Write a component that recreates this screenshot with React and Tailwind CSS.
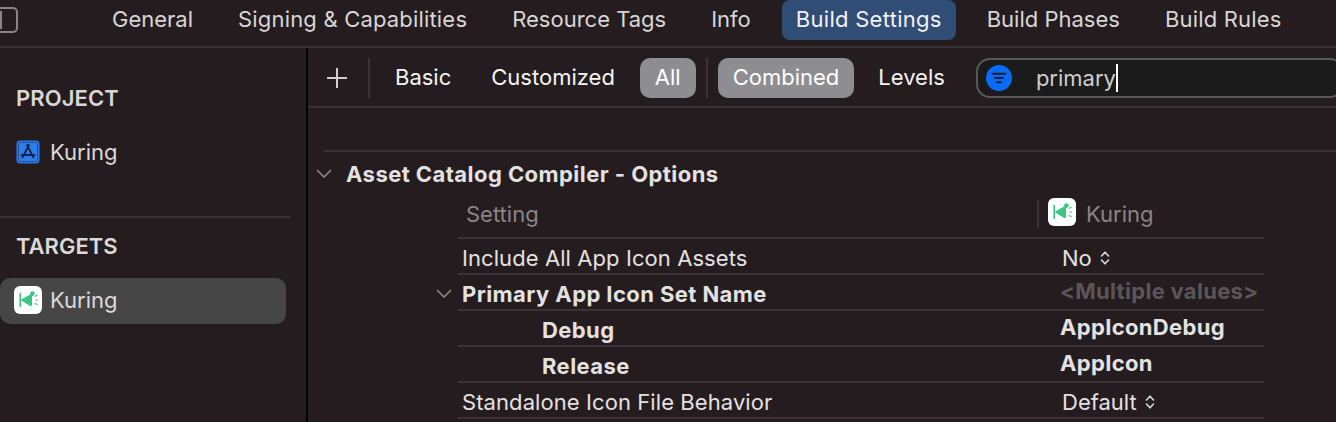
import React from "react";

const KuringIcon = ({ className }) => (
  <svg viewBox="0 0 28 28" className={className}>
    <rect width="28" height="28" rx="6" fill="#fff" />
    <path d="M6.2 7.5v13" stroke="#3cc583" strokeWidth="1.6" strokeLinecap="round" />
    <path d="M6.5 14 16.5 8.2 18 9v10.5l-1.5.8Z" fill="#3cc583" />
    <circle cx="18.4" cy="7.6" r="2.3" fill="#3cc583" />
    <path d="M21.2 10.2l1.9-.9M21.8 14h2M21.2 17.6l1.9.9" stroke="#3cc583" strokeWidth="1.2" strokeLinecap="round" />
  </svg>
);

const ProjectIcon = () => (
  <svg viewBox="0 0 24 24" className="w-6 h-6 shrink-0">
    <rect x="0.5" y="0.5" width="23" height="23" rx="4" fill="#2f7de9" />
    <rect x="2.4" y="2.4" width="19.2" height="19.2" rx="2.5" fill="none" stroke="#174a96" strokeWidth="0.9" />
    <path d="M13 5 8 14.5M11 5l6.5 12.5M5.5 15h13M7.8 15l-1.6 2.6" stroke="#0e2549" strokeWidth="1.8" strokeLinecap="round" fill="none" />
  </svg>
);

const Chevron = ({ className }) => (
  <svg viewBox="0 0 16 10" className={className} fill="none">
    <path d="M1.5 1.5 8 8l6.5-6.5" stroke="#8c8688" strokeWidth="1.7" strokeLinecap="round" strokeLinejoin="round" />
  </svg>
);

const Stepper = () => (
  <svg viewBox="0 0 10 16" className="w-[10px] h-4 ml-[8px]" fill="none">
    <path d="M1.5 6 5 2.2 8.5 6M1.5 10 5 13.8 8.5 10" stroke="#dcd9da" strokeWidth="1.6" strokeLinecap="round" strokeLinejoin="round" />
  </svg>
);

const Row = ({ label, value, indent, bold, chevron, valueClass, stepper }) => (
  <div className="flex items-center border-b-2 border-[#3a3234] h-[36px]">
    <div className={`relative w-[602px] shrink-0 pt-1 ${bold ? "font-bold tracking-[0.42px]" : "tracking-[0.08px]"} ${indent ? "pl-[84px]" : "pl-1"} text-[#e4e1e2]`}>
      {chevron && <Chevron className="absolute left-[-22px] top-[13px] w-4 h-[10px]" />}
      {label}
    </div>
    <div className={`flex items-center ${valueClass || "pl-[2px] pt-1 text-[#e4e1e2]"}`}>
      {value}
      {stepper && <Stepper />}
    </div>
  </div>
);

export default function App() {
  const tabs = [
    ["General", ""],
    ["Signing & Capabilities", "tracking-[0.18px]"],
    ["Resource Tags", ""],
    ["Info", ""],
    ["Build Settings", "tracking-[0.28px]"],
    ["Build Phases", ""],
    ["Build Rules", "tracking-[0.18px]"],
  ];
  return (
    <div className="w-[1336px] h-[422px] overflow-hidden bg-[#241c1e] text-[22px] leading-[28px] text-[#e4e1e2] flex flex-col" style={{ fontFamily: "Inter, 'Liberation Sans', sans-serif" }}>
      {/* Top tabs */}
      <div className="h-[48px] shrink-0 border-b-2 border-[#3a3234] flex items-start">
        <div className="w-[19px] h-[26px] mt-[7px] ml-[-1px] border-2 border-l-0 border-[#8a8486] rounded-r-[5px] flex shrink-0 items-center">
          <div className="w-[3px] h-[18px] bg-[#8a8486]"></div>
        </div>
        <div className="flex ml-[80px] gap-[17px]">
          {tabs.map(([t, cls]) => (
            <div key={t} className={`h-[40px] px-[14px] pb-[2px] flex items-center rounded-[8px] ${cls} ${t === "Build Settings" ? "bg-[#2f4d75] text-[#f2f2f4]" : "text-[#d9d6d7]"}`}>{t}</div>
          ))}
        </div>
      </div>

      <div className="flex flex-1 min-h-0">
        {/* Sidebar */}
        <div className="w-[308px] shrink-0 border-r-2 border-black pt-[36px] font-normal">
          <div className="pl-4 font-semibold tracking-[0.1px] text-[#d9d6d7]">PROJECT</div>
          <div className="flex items-center pl-4 gap-[10px] mt-[26px] h-[28px] text-[#dcd9da]">
            <ProjectIcon />
            Kuring
          </div>
          <div className="mt-[50px] w-[290px] h-[2px] bg-[#3a3234]"></div>
          <div className="pl-4 font-semibold text-[#dcd9da] mt-[14px]">TARGETS</div>
          <div className="mt-[18px] w-[286px] h-[46px] rounded-[10px] bg-[#464646] flex items-center pl-[14px] pb-[2px] gap-2 text-[#dcd9da]">
            <KuringIcon className="w-7 h-7 shrink-0" />
            Kuring
          </div>
        </div>

        {/* Main */}
        <div className="flex-1 min-w-0 flex flex-col">
          {/* Filter bar */}
          <div className="h-[60px] shrink-0 border-b-2 border-[#3a3234] flex items-center pt-[2px] text-[#f4f3f3]">
            <svg viewBox="0 0 22 22" className="w-[22px] h-[22px] ml-[18px]" fill="none">
              <path d="M11 1v20M1 11h20" stroke="#d0cdce" strokeWidth="2" />
            </svg>
            <div className="w-[2px] h-[40px] bg-[#3a3234] ml-[20px]"></div>
            <div className="ml-[25px] pb-[2px]">Basic</div>
            <div className="ml-[40px] pb-[2px]">Customized</div>
            <div className="ml-[25px] h-[40px] px-[15px] pb-[2px] flex items-center bg-[#8e8d92] rounded-[10px] text-white">All</div>
            <div className="w-[2px] h-[40px] bg-[#3a3234] ml-[10px]"></div>
            <div className="ml-[10px] h-[40px] px-[15px] pb-[2px] flex items-center bg-[#8e8d92] rounded-[10px] text-white">Combined</div>
            <div className="ml-[24px] pb-[2px]">Levels</div>
            <div className="ml-[31px] flex-1 h-[40px] -mr-2 rounded-[14px] bg-[#1c1b1c] border-2 border-[#58585a] flex items-center pl-[8px] text-[#cfcdce]">
              <svg viewBox="0 0 26 26" className="w-[26px] h-[26px] shrink-0">
                <circle cx="13" cy="13" r="13" fill="#0a6cf5" />
                <path d="M6.5 8.8h13M9 13h8M11.2 17.2h3.6" stroke="#10203a" strokeWidth="2" strokeLinecap="round" />
              </svg>
              <span className="ml-[24px]">primary</span>
              <span className="w-[2px] h-[28px] bg-white"></span>
            </div>
          </div>

          {/* Section */}
          <div className="ml-[16px] mt-[42px] h-[2px] bg-[#3a3234] shrink-0"></div>
          <div className="ml-[8px] mt-[8px] flex items-center font-bold tracking-[0.44px] text-[#e4e1e2] h-[28px]">
            <Chevron className="w-4 h-[10px]" />
            <span className="ml-[14px]">Asset Catalog Compiler - Options</span>
          </div>

          {/* Table */}
          <div className="ml-[150px] w-[806px] mt-[10px]">
            <div className="flex items-center h-[41px] border-b-2 border-[#3a3234] text-[#8b8587] pb-[8px]">
              <div className="w-[579px] pl-[8px] shrink-0">Setting</div>
              <div className="w-[2px] h-[28px] bg-[#3a3234]"></div>
              <KuringIcon className="w-7 h-7 ml-[9px] -mt-1 shrink-0" />
              <div className="ml-[10px]">Kuring</div>
            </div>
            <Row label="Include All App Icon Assets" value="No" stepper />
            <Row label="Primary App Icon Set Name" value="<Multiple values>" bold chevron valueClass="font-bold tracking-[0.3px] pb-[2px] text-[#5c5557]" />
            <Row label="Debug" value="AppIconDebug" bold indent valueClass="font-bold tracking-[0.33px] pb-[2px] text-[#e4e1e2]" />
            <Row label="Release" value="AppIcon" bold indent valueClass="font-bold tracking-[0.33px] pb-[2px] text-[#e4e1e2]" />
            <Row label="Standalone Icon File Behavior" value="Default" stepper />
          </div>
        </div>
      </div>
    </div>
  );
}
